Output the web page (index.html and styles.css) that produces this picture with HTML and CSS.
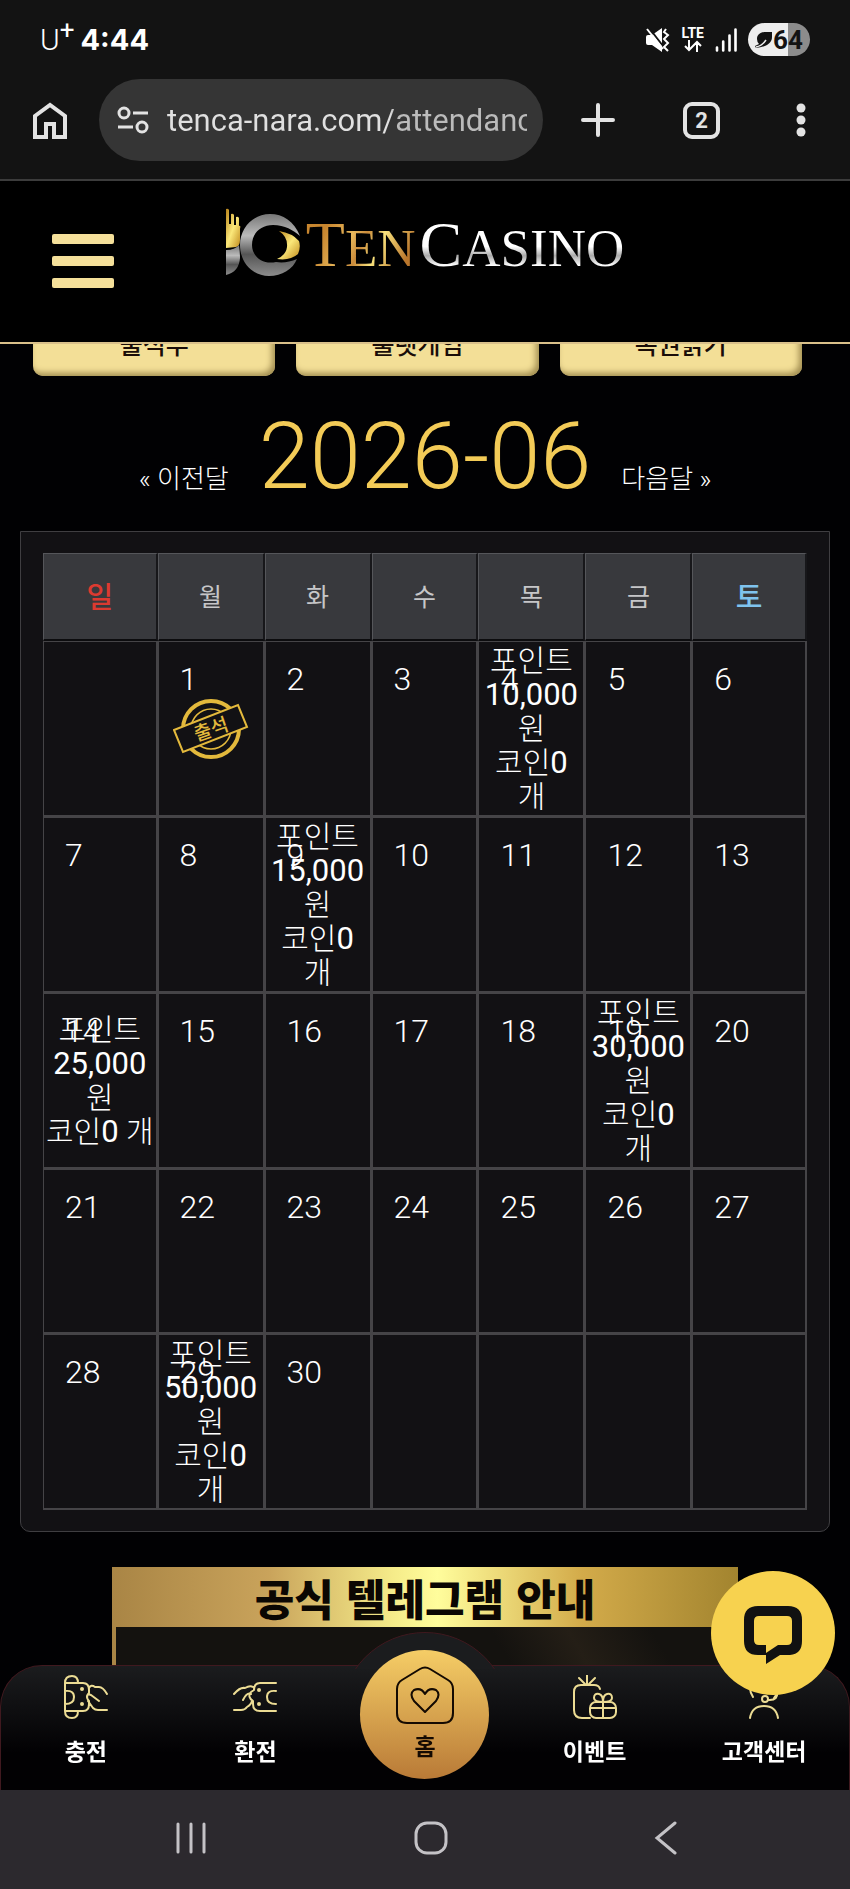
FILE: index.html
```html
<!DOCTYPE html>
<html lang="ko">
<head>
    <meta charset="UTF-8">
    <meta name="viewport" content="width=device-width, initial-scale=1.0">
    <title>TEN CASINO</title>
    <link rel="stylesheet" href="styles.css">
</head>
<body>
    <div class="status-bar">
        <div class="status-left">
            <span class="carrier">U<sup>+</sup></span>
            <span class="clock">4:44</span>
        </div>
        <div class="status-right">
            <svg width="24" height="24" viewBox="0 0 24 24">
                <path d="M0 9q0-2 2-2h4l10-7v24L6 17H2q-2 0-2-2z" fill="#fff"/>
                <path d="M20 1l-2 3 4 3-4 4 4 4-4 4 4 4" fill="none" stroke="#fff" stroke-width="2"/>
                <path d="M3 0l14 18" stroke="#131313" stroke-width="2"/>
                <path d="M1 1l16 20" stroke="#fff" stroke-width="2"/>
            </svg>
            <span class="lte">LTE
                <svg width="18" height="12" viewBox="0 0 18 12" fill="none" stroke="#fff" stroke-width="2">
                    <path d="M5 0v10M1 6l4 4 4-4M13 12V2M9 6l4-4 4 4"/>
                </svg>
            </span>
            <svg width="22" height="24" viewBox="0 0 22 24" fill="none" stroke="#fff" stroke-width="2.6" stroke-linecap="round">
                <path d="M2 19.500v3M8.200 13.500v9M14.500 7.500v15M20.500 1.500v21"/>
            </svg>
            <span class="battery">
                <svg width="18" height="16" viewBox="0 0 18 16">
                    <path d="M17 0C8-1 2 1 2 7q0 3 2 5l-4 2 1 2c9-1 16-4 16-11z" fill="#131313"/>
                    <path d="M1 15Q7 14 11 8" fill="none" stroke="#eee" stroke-width="1.500"/>
                </svg>64
            </span>
        </div>
    </div>

    <div class="browser-bar">
        <button class="icon-btn" aria-label="Home">
            <svg width="34" height="37" viewBox="0 0 34 37" fill="none" stroke="#e3e3e3" stroke-width="4">
                <path d="M2 35V14L17 3l15 11v21H21V22h-8v13z"/>
            </svg>
        </button>
        <div class="address">
            <svg width="32" height="28" viewBox="0 0 32 28" fill="none" stroke="#e3e3e3" stroke-width="3">
                <circle cx="7" cy="7" r="5"/>
                <circle cx="25" cy="21" r="5"/>
                <path d="M16 7h15M1 21h15"/>
            </svg>
            <input type="text" aria-label="Address" value="tenca-nara.com/attendance">
        </div>
        <button class="icon-btn plus" aria-label="New tab">
            <svg width="34" height="34" viewBox="0 0 34 34" stroke="#e3e3e3" stroke-width="4" stroke-linecap="round">
                <path d="M17 2v30M2 17h30"/>
            </svg>
        </button>
        <button class="icon-btn tabs" aria-label="Tabs">2</button>
        <button class="icon-btn" aria-label="More">
            <svg width="10" height="34" viewBox="0 0 10 34" fill="#e3e3e3">
                <circle cx="5" cy="5" r="4.500"/>
                <circle cx="5" cy="17" r="4.500"/>
                <circle cx="5" cy="29" r="4.500"/>
            </svg>
        </button>
    </div>

    <header class="site-header">
        <button class="menu" aria-label="메뉴">
            <span></span>
            <span></span>
            <span></span>
        </button>
        <a class="logo" href="#">
            <svg width="76" height="70" viewBox="0 0 76 70">
                <defs>
                    <linearGradient id="silver" x1="0" y1="0" x2="0" y2="1">
                        <stop offset="0" stop-color="#777"/>
                        <stop offset=".35" stop-color="#bbb"/>
                        <stop offset=".65" stop-color="#555"/>
                        <stop offset="1" stop-color="#8c8c8c"/>
                    </linearGradient>
                    <linearGradient id="gold" x1="0" y1="0" x2="1" y2="1">
                        <stop offset="0" stop-color="#b98318"/>
                        <stop offset=".5" stop-color="#fbe87a"/>
                        <stop offset="1" stop-color="#c08a1c"/>
                    </linearGradient>
                </defs>
                <path d="M0 1q2-1 3 1v14h2V6q2-1 3 1v10h2V9q2-1 3 1v8q2-1 1 3v11q0 6-4 7L0 40z" fill="url(#gold)"/>
                <path d="M0 42q9 0 13-5 1 8 1 13-1 14-14 17z" fill="url(#silver)"/>
                <path fill-rule="evenodd" d="M74 28C68 13 57 6 44 6 27 6 14 20 14 37s12 31 29 31c13 0 24-7 28-17-7 3-14 4-21 3C36 57 26 48 26 37c0-12 9-20 21-20 12 0 20 5 27 11z" fill="url(#silver)"/>
                <path d="M53 23q13 2 20 10 2 6-1 13-8 7-21 5 9-4 10-12Q62 29 53 23z" fill="url(#gold)"/>
            </svg>
            <span class="logo-ten"><b>T</b>EN</span>
            <span class="logo-casino"><b>C</b>ASINO</span>
        </a>
    </header>

    <main>
        <div class="tabs-row">
            <button>출석부</button>
            <button>룰렛게임</button>
            <button>복권긁기</button>
        </div>

        <div class="month">
            <a href="#">« 이전달</a>
            <h1>2026-06</h1>
            <a href="#">다음달 »</a>
        </div>

        <div class="calendar">
            <table>
                <thead>
                    <tr>
                        <th class="sun">일</th>
                        <th>월</th>
                        <th>화</th>
                        <th>수</th>
                        <th>목</th>
                        <th>금</th>
                        <th class="sat">토</th>
                    </tr>
                </thead>
                <tbody>
                    <tr>
                        <td></td>
                        <td>
                            <span class="day">1</span>
                            <svg class="stamp" width="76" height="62" viewBox="0 0 76 62">
                                <g fill="none" stroke="#e3b93c">
                                    <circle cx="38" cy="31" r="28" stroke-width="4"/>
                                    <circle cx="38" cy="31" r="20" stroke-width="1.500"/>
                                    <path d="M1 32L65 7l9 22-64 25z" fill="#121114" stroke-width="2"/>
                                </g>
                                <text x="38" y="38" text-anchor="middle" transform="rotate(-19 38 31)">출석</text>
                            </svg>
                        </td>
                        <td><span class="day">2</span></td>
                        <td><span class="day">3</span></td>
                        <td><span class="day">4</span><p>포인트<b>10,000</b> 원</p><p>코인<b>0</b> 개</p></td>
                        <td><span class="day">5</span></td>
                        <td><span class="day">6</span></td>
                    </tr>
                    <tr>
                        <td><span class="day">7</span></td>
                        <td><span class="day">8</span></td>
                        <td><span class="day">9</span><p>포인트<b>15,000</b> 원</p><p>코인<b>0</b> 개</p></td>
                        <td><span class="day">10</span></td>
                        <td><span class="day">11</span></td>
                        <td><span class="day">12</span></td>
                        <td><span class="day">13</span></td>
                    </tr>
                    <tr>
                        <td><span class="day">14</span><p>포인트<b>25,000</b> 원</p><p>코인<b>0</b> 개</p></td>
                        <td><span class="day">15</span></td>
                        <td><span class="day">16</span></td>
                        <td><span class="day">17</span></td>
                        <td><span class="day">18</span></td>
                        <td><span class="day">19</span><p>포인트<b>30,000</b> 원</p><p>코인<b>0</b> 개</p></td>
                        <td><span class="day">20</span></td>
                    </tr>
                    <tr class="plain">
                        <td><span class="day">21</span></td>
                        <td><span class="day">22</span></td>
                        <td><span class="day">23</span></td>
                        <td><span class="day">24</span></td>
                        <td><span class="day">25</span></td>
                        <td><span class="day">26</span></td>
                        <td><span class="day">27</span></td>
                    </tr>
                    <tr>
                        <td><span class="day">28</span></td>
                        <td><span class="day">29</span><p>포인트<b>50,000</b> 원</p><p>코인<b>0</b> 개</p></td>
                        <td><span class="day">30</span></td>
                        <td></td>
                        <td></td>
                        <td></td>
                        <td></td>
                    </tr>
                </tbody>
            </table>
        </div>

        <section class="banner">
            <h2>공식 텔레그램 안내</h2>
            <div class="banner-body"></div>
        </section>
    </main>

    <button class="chat" aria-label="채팅">
        <svg width="58" height="58" viewBox="0 0 58 58">
            <path fill-rule="evenodd" d="M14 0h30q14 0 14 14v21q0 13-12 14h-10L22 58v-9h-8Q0 49 0 35V14Q0 0 14 0zm1 10q-5 0-5 5v19q0 5 5 5h7v8l12-8h9q5 0 5-5V15q0-5-5-5z" fill="#111"/>
        </svg>
    </button>

    <footer class="bottom">
        <nav class="nav">
            <a href="#">
                <svg width="44" height="44" viewBox="0 0 44 44">
                    <path d="M1 8v28q0 7 7 7 6 0 6-7H1M1 8q0-7 7-7 6 0 6 7H1M14 8h5q6 0 6 7v3q-4 4 0 8v3q0 7-6 7h-5M1 16q9-1 9 6t-9 7M25 13q2-4 6-1h4q4 0 8 7M24 19l3 1 8 6M24 26l5 7q2 2 5 2h9"/>
                    <circle cx="18" cy="14" r="1"/>
                    <circle cx="18" cy="29" r="1"/>
                </svg>
                충전
            </a>
            <a href="#">
                <svg width="44" height="44" viewBox="0 0 44 44">
                    <path d="M43 8H27q-6 0-6 7l-3 2q-4 5 2 9v3q0 7 7 7h16M43 16q-9-1-9 6t9 7M20 12q-3-2-8 1-5-1-11 6M18 19q-4-2-8 6M19 25q0 4-5 7-2 3-6 3H1"/>
                    <circle cx="26" cy="15" r="1"/>
                    <circle cx="26" cy="29" r="1"/>
                </svg>
                환전
            </a>
            <a class="home" href="#">
                <span class="home-circle">
                    <svg width="58" height="58" viewBox="0 0 58 58">
                        <path d="M24 3q5-3 10 0l18 11q5 3 5 9v24q0 10-10 10H11Q1 57 1 47V23q0-6 5-9zM29 46L18 35q-5-7 0-11 7-3 11 4 4-7 11-4 5 4 0 11z"/>
                    </svg>
                    홈
                </span>
            </a>
            <a href="#">
                <svg width="44" height="44" viewBox="0 0 44 44">
                    <path d="M27 14q-1-4-6-4H8q-7 0-7 7v18q0 8 8 8h8M14 9V0M12 9L6 3M16 9l6-6"/>
                    <rect x="17" y="27" width="26" height="16" rx="6"/>
                    <path d="M30 27v16M18 33h24M30 27q-9 0-9-4 0-5 5-4 4 1 4 8 0-7 4-8 5-1 5 4 0 4-9 4"/>
                </svg>
                이벤트
            </a>
            <a href="#">
                <svg width="44" height="44" viewBox="0 0 44 44">
                    <path d="M11 22q-3-5-3-9Q10 1 22 1t14 12q0 5-4 10M8 43q2-12 14-12t14 12M35 15q2 11-9 10"/>
                    <circle cx="23" cy="24" r="3"/>
                </svg>
                고객센터
            </a>
        </nav>
        <div class="system-nav">
            <button aria-label="Recents">
                <svg width="32" height="34" viewBox="0 0 32 34"><path d="M3 3v28M16 3v28M29 3v28"/></svg>
            </button>
            <button aria-label="Home">
                <svg width="34" height="34" viewBox="0 0 34 34"><rect x="2" y="2" width="30" height="30" rx="11"/></svg>
            </button>
            <button aria-label="Back">
                <svg width="24" height="34" viewBox="0 0 24 34"><path d="M21 2L3 17l18 15"/></svg>
            </button>
        </div>
    </footer>
</body>
</html>
```

FILE: styles.css
```css
* {
    margin: 0;
    padding: 0;
    box-sizing: border-box;
}
body {
    background-color: #010103;
    color: #fff;
    font-family: Roboto, "Noto Sans CJK KR", sans-serif;
}
button {
    border: 0;
    background: none;
    font-family: inherit;
    cursor: pointer;
}
a {
    color: inherit;
    text-decoration: none;
}
svg {
    display: block;
    flex-shrink: 0;
}

/* phone status bar */
.status-bar {
    display: flex;
    justify-content: space-between;
    align-items: center;
    height: 79px;
    padding: 0 40px;
    background-color: #131313;
}
.status-left {
    display: flex;
    align-items: center;
    gap: 6px;
}
.carrier {
    font-family: Roboto, sans-serif;
    font-size: 30px;
    font-weight: 300;
    line-height: 32px;
}
.carrier sup {
    font-size: 26px;
    font-weight: 400;
    line-height: 0;
}
.clock {
    font-family: Inter, sans-serif;
    font-size: 29px;
    font-weight: 700;
}
.status-right {
    display: flex;
    align-items: center;
    gap: 11px;
}
.lte {
    display: flex;
    flex-direction: column;
    align-items: center;
    font-size: 14px;
    font-weight: 700;
    line-height: 13px;
}
.battery {
    display: flex;
    align-items: center;
    justify-content: center;
    width: 62px;
    height: 33px;
    border-radius: 17px;
    background: linear-gradient(90deg, #eee 64%, #8c8c8c 64%);
    color: #131313;
    font-size: 26px;
    font-weight: 700;
}

/* browser toolbar */
.browser-bar {
    display: flex;
    align-items: center;
    height: 102px;
    padding: 0 44px 18px 33px;
    border-bottom: 2px solid #3c3c3c;
    background-color: #131313;
}
.icon-btn {
    flex-shrink: 0;
}
.address {
    display: flex;
    flex: 1;
    align-items: center;
    gap: 18px;
    height: 82px;
    min-width: 0;
    margin: 0 38px 0 32px;
    padding: 0 16px 0 18px;
    border-radius: 41px;
    background-color: #353535;
}
.address input {
    flex: 1;
    min-width: 0;
    height: 44px;
    border: 0;
    outline: 0;
    background: linear-gradient(90deg, #e0e0e0 62%, #bbb 63%);
    -webkit-background-clip: text;
    background-clip: text;
    color: transparent;
    font-family: Roboto, sans-serif;
    font-size: 31px;
}
.plus {
    margin-right: 68px;
}
.tabs {
    width: 37px;
    height: 37px;
    margin-right: 76px;
    border: 4px solid #e3e3e3;
    border-radius: 9px;
    color: #e3e3e3;
    font-size: 22px;
    font-weight: 700;
    line-height: 29px;
}

/* site header */
.site-header {
    position: relative;
    z-index: 1;
    display: flex;
    justify-content: center;
    height: 163px;
    padding-top: 27px;
    border-bottom: 2px solid #d9c08a;
    background-color: #000;
}
.menu {
    position: absolute;
    top: 53px;
    left: 52px;
    display: flex;
    flex-direction: column;
    gap: 12px;
    width: 62px;
}
.menu span {
    height: 10px;
    border-radius: 2px;
    background-color: #f5e09a;
}
.logo {
    display: flex;
    align-items: flex-start;
    gap: 4px;
    font-family: "Liberation Serif", serif;
    font-size: 53px;
    line-height: 74px;
}
.logo b {
    font-size: 64px;
    font-weight: 400;
}
.logo span {
    -webkit-background-clip: text;
    background-clip: text;
    color: transparent;
}
.logo .logo-ten {
    background-image: linear-gradient(115deg, #c8862f 20%, #e9b95c 40%, #c98a3a 50%, #f9e27c 62%, #b9762c 85%);
}
.logo .logo-casino {
    background-image: linear-gradient(180deg, #fff 50%, #aaa 62%, #fff 75%);
}

.tabs-row {
    display: flex;
    gap: 21px;
    margin-top: -28px;
    padding: 0 48px 0 33px;
}
.tabs-row button {
    flex: 1;
    height: 60px;
    padding-bottom: 6px;
    border-radius: 10px;
    background-color: #f3df97;
    box-shadow: inset -3px -3px 6px #a08c50;
    color: #1a0d08;
    font-size: 25px;
    font-weight: 500;
}

.month {
    display: flex;
    justify-content: center;
    align-items: baseline;
    gap: 30px;
    margin-top: 31px;
    font-size: 26px;
    font-weight: 300;
}
.month h1 {
    color: #f3cb57;
    font-size: 92px;
    font-weight: 300;
    line-height: 100px;
}

/* calendar */
.calendar {
    margin: 24px 20px 0;
    padding: 21px 22px;
    border: 1px solid #3f3e41;
    border-radius: 0 0 10px 10px;
    background-color: #121114;
}
.calendar table {
    width: 100%;
    table-layout: fixed;
    border-spacing: 0;
}
.calendar th {
    width: 14%;
    height: 88px;
    padding-bottom: 4px;
    border: 1px solid #55565a;
    border-right: 2px solid #17171a;
    border-bottom: 2px solid #0c0c0e;
    background-color: #38393d;
    color: #c6c6c8;
    font-size: 25px;
    font-weight: 400;
}
.calendar .sun,
.calendar .sat {
    width: 15%;
    font-size: 29px;
    font-weight: 500;
}
.calendar .sun {
    color: #dc3a30;
}
.calendar .sat {
    color: #7fc3ee;
}
.calendar td {
    position: relative;
    height: 176px;
    border: 1px solid #454447;
    border-right-width: 2px;
    border-bottom-width: 2px;
    font-size: 30px;
    font-weight: 300;
    line-height: 34px;
    text-align: center;
}
.calendar .plain td {
    height: 165px;
}
.calendar p b {
    font-size: 31px;
    font-weight: 400;
}
.day {
    position: absolute;
    top: 20px;
    left: 21px;
    font-size: 32px;
}
.stamp {
    margin: 0 auto;
}
.stamp text {
    fill: #e3b93c;
    font-size: 19px;
    font-weight: 500;
}

/* telegram banner */
.banner {
    width: 626px;
    max-width: 100%;
    margin: 35px auto 0;
    background: linear-gradient(90deg, #a98545, #c9a35b 25%, #f5ec8a 45%, #fffd9c 52%, #d3ab4a 75%, #a2842f);
}
.banner h2 {
    height: 60px;
    color: #0b0703;
    font-family: "Noto Sans CJK KR", sans-serif;
    font-size: 43px;
    font-weight: 900;
    line-height: 60px;
    text-align: center;
}
.banner-body {
    height: 140px;
    margin: 0 4px;
    background: linear-gradient(60deg, #14120f 65%, #241e16 76%, #14120f 88%);
}

.chat {
    position: fixed;
    right: 15px;
    bottom: 194px;
    z-index: 3;
    display: flex;
    justify-content: center;
    align-items: center;
    width: 124px;
    height: 124px;
    padding-top: 4px;
    border-radius: 50%;
    background-color: #f7d24f;
}

/* bottom menu */
.bottom {
    position: fixed;
    left: 0;
    right: 0;
    bottom: 0;
    z-index: 2;
}
.nav {
    display: flex;
    height: 125px;
    border: 1px solid #40191f;
    border-bottom: 0;
    border-radius: 42px 42px 0 0;
    background: linear-gradient(180deg, #1b1c1e, #020103 70%);
}
.nav a {
    position: relative;
    display: flex;
    flex: 1;
    flex-direction: column;
    align-items: center;
    gap: 16px;
    padding-top: 9px;
    font-family: "Noto Sans CJK KR", sans-serif;
    font-size: 23px;
    font-weight: 700;
    line-height: 30px;
}
.nav svg {
    fill: none;
    stroke: #ecdc94;
    stroke-width: 2;
    stroke-linecap: round;
    stroke-linejoin: round;
}
.nav .home {
    padding: 0;
}
/* raised edge around the home button */
.home::before {
    content: "";
    position: absolute;
    top: -34px;
    width: 168px;
    height: 168px;
    border: 1px solid #40191f;
    border-radius: 50%;
    background-color: #1b1c1e;
    clip-path: inset(0 0 133px 0);
}
.home-circle {
    position: relative;
    display: flex;
    flex-direction: column;
    align-items: center;
    gap: 6px;
    width: 129px;
    height: 129px;
    margin-top: -16px;
    padding-top: 16px;
    border-radius: 50%;
    background: linear-gradient(180deg, #f5cd66, #b97a37);
    color: #140a02;
}
.nav .home svg {
    stroke: #140a02;
}

.system-nav {
    display: flex;
    justify-content: space-between;
    align-items: center;
    height: 99px;
    padding: 0 172px 4px 175px;
    background-color: #2c292e;
}
.system-nav svg {
    fill: none;
    stroke: #c4c2c6;
    stroke-width: 3;
    stroke-linecap: round;
}
```
